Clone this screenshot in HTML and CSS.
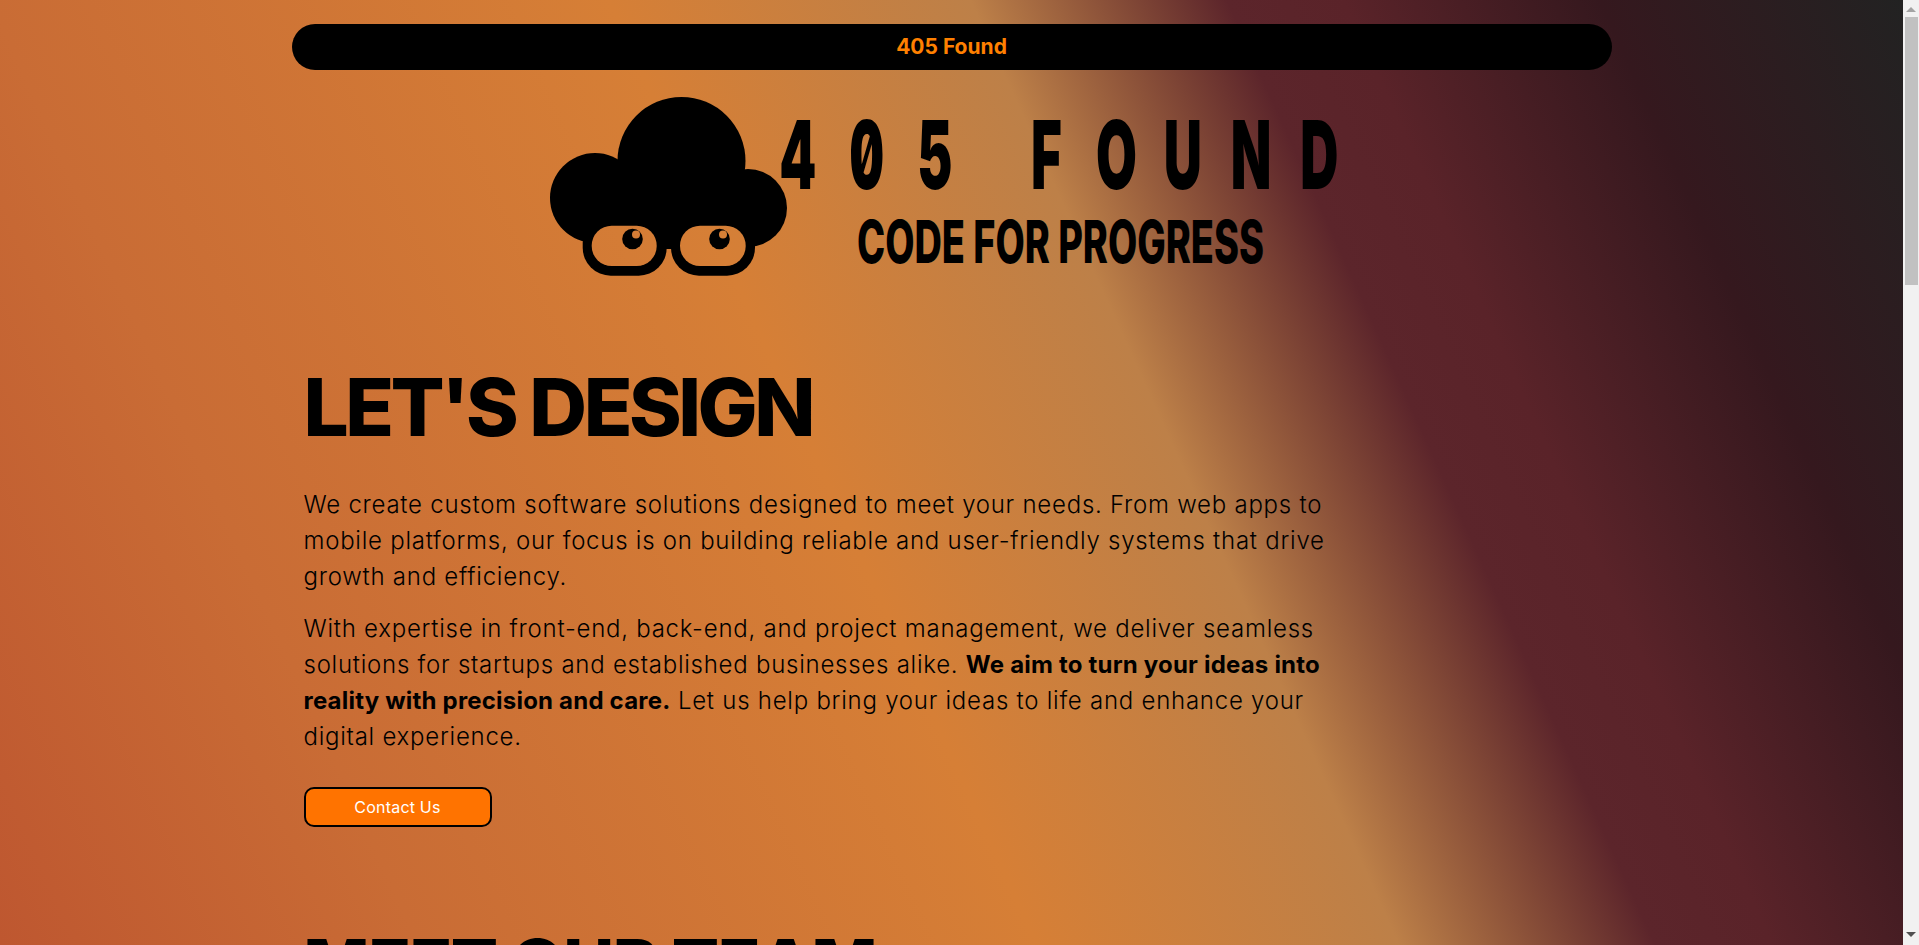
FILE: index.html
```html
<!DOCTYPE html>
<html lang="en">
<head>
    <meta charset="UTF-8">
    <meta name="viewport" content="width=device-width, initial-scale=1.0">
    <title>405 Found</title>
    <!-- Styles -->
    <link rel="stylesheet" href="styles.css">
</head>
<body>
    <div class="page">
        <div class="viewport">
            <div class="container">
                <header class="topbar">405 Found</header>
                <!-- Logo -->
                <svg class="logo" viewBox="0 0 820 190" role="img" aria-label="405 Found, code for progress">
                    <defs>
                        <mask id="cloudMask">
                            <circle cx="139.5" cy="71" r="64" fill="#fff"/>
                            <circle cx="53" cy="108" r="45" fill="#fff"/>
                            <circle cx="206" cy="118" r="39" fill="#fff"/>
                            <rect x="41" y="100" width="172" height="52" fill="#fff"/>
                            <rect x="100" y="100" width="50" height="59" fill="#fff"/>
                            <rect x="40.7" y="125" width="84" height="60.7" rx="28" fill="#fff"/>
                            <rect x="129" y="125" width="84" height="60.7" rx="28" fill="#fff"/>
                            <rect x="49.7" y="135.7" width="65" height="40.3" rx="20" fill="#000"/>
                            <rect x="138" y="135.7" width="65.7" height="40.3" rx="20" fill="#000"/>
                            <circle cx="90.5" cy="149" r="10.3" fill="#fff"/>
                            <circle cx="177.5" cy="149" r="10.3" fill="#fff"/>
                            <circle cx="94" cy="144.5" r="4" fill="#000"/>
                            <circle cx="181" cy="144.5" r="4" fill="#000"/>
                        </mask>
                    </defs>
                    <rect width="260" height="190" mask="url(#cloudMask)"/>
                    <text class="logo-title" transform="translate(239,99) scale(.88,1.58)" x="0 78 156 227 284 358 435 511 590">405 FOUND</text>
                    <text class="logo-sub" transform="translate(315,173) scale(1,1.47)" textLength="407" lengthAdjust="spacingAndGlyphs">CODE FOR PROGRESS</text>
                </svg>

                <section class="intro">
                    <h1>LET'S DESIGN</h1>
                    <p>We create custom software solutions designed to meet your needs. From web apps to mobile platforms, our focus is on building reliable and user-friendly systems that drive growth and efficiency.</p>
                    <p>With expertise in front-end, back-end, and project management, we deliver seamless solutions for startups and established businesses alike. <strong>We aim to turn your ideas into reality with precision and care.</strong> Let us help bring your ideas to life and enhance your digital experience.</p>
                    <a class="btn-contact" href="#">Contact Us</a>
                </section>

                <section class="team">
                    <h2>MEET OUR TEAM</h2>
                </section>
            </div>
        </div>
        <!-- Scrollbar -->
        <div class="scrollbar">
            <span class="arrow-up"></span>
            <div class="thumb"></div>
            <span class="arrow-down"></span>
        </div>
    </div>
</body>
</html>
```

FILE: styles.css
```css
html, body {
    margin: 0;
    padding: 0;
    height: 100%;
    overflow: hidden;
}

body {
    font-family: 'Inter', 'Liberation Sans', sans-serif;
    color: #000;
}

.page {
    display: flex;
    height: 945px;
}

.viewport {
    flex: 1;
    overflow: hidden;
    background: linear-gradient(65.6deg, #be5730 0%, #c96c35 18%, #d67f36 44.5%, #bd8048 60%, #5c252b 71%, #5a2329 76%, #35181e 87%, #222222 100%);
}

.container {
    width: 1320px;
    margin: 0 auto;
    padding-top: 24px;
}

.topbar {
    height: 46px;
    line-height: 46px;
    border-radius: 23px;
    background: #000;
    color: #ff8000;
    text-align: center;
    font-size: 21px;
    font-weight: 700;
}

.logo {
    display: block;
    width: 820px;
    height: 190px;
    margin: 20px auto 0;
}

.logo-title {
    font-family: 'Inter', sans-serif;
    font-weight: 900;
    font-size: 60px;
    font-feature-settings: "zero", "tnum";
}

.logo-sub {
    font-family: 'Inter', sans-serif;
    font-weight: 800;
    font-size: 40px;
}

.intro, .team {
    padding: 0 12px;
}

.intro {
    padding-top: 76px;
    width: 1076px;
}

h1, h2 {
    margin: 0;
    font-weight: 800;
}

h1 {
    font-size: 80px;
    line-height: 102px;
    letter-spacing: -3.5px;
    margin-bottom: 29px;
}

h2 {
    font-size: 70px;
    line-height: 84px;
    letter-spacing: -1.4px;
}

p {
    margin: 0 0 16px;
    font-size: 24px;
    line-height: 36px;
    font-weight: 300;
    letter-spacing: 0.75px;
}

strong {
    font-weight: 700;
    letter-spacing: 0.2px;
}

.btn-contact {
    display: block;
    box-sizing: border-box;
    width: 188px;
    height: 40px;
    line-height: 36px;
    margin-top: 32px;
    border: 2px solid #000;
    border-radius: 10px;
    background: #ff7300;
    color: #fff;
    font-size: 16px;
    letter-spacing: 0.2px;
    text-align: center;
    text-decoration: none;
}

.team {
    padding-top: 96px;
}

.scrollbar {
    width: 16px;
    height: 945px;
    background: #f1f1f1;
    display: flex;
    flex-direction: column;
    align-items: center;
}

.arrow-up {
    margin-top: 7px;
    border-left: 5px solid transparent;
    border-right: 5px solid transparent;
    border-bottom: 5px solid #a3a3a3;
}

.thumb {
    width: 13px;
    height: 268px;
    margin-top: 5px;
    margin-left: 1px;
    background: #c1c1c1;
}

.arrow-down {
    margin-top: auto;
    margin-bottom: 8px;
    border-left: 5px solid transparent;
    border-right: 5px solid transparent;
    border-top: 5px solid #505050;
}
```
